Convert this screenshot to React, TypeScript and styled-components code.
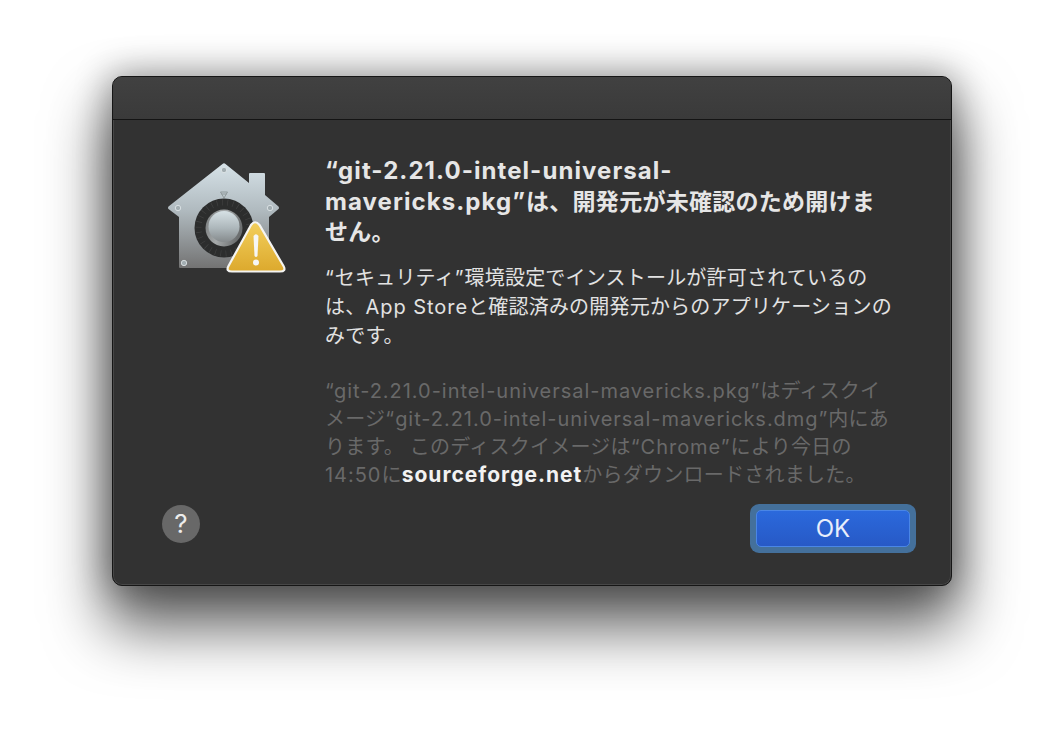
import React from "react";
import styled, { createGlobalStyle } from "styled-components";

const Global = createGlobalStyle`
  html, body { margin: 0; padding: 0; background: #fff; }
  body { width: 1064px; height: 734px; overflow: hidden; font-family: Inter, "Noto Sans CJK JP", sans-serif; }
`;

const Page = styled.div`
  width: 1064px;
  height: 734px;
  box-sizing: border-box;
  padding: 76px 112px 148px;
`;

const Dialog = styled.div`
  width: 840px;
  height: 510px;
  box-sizing: border-box;
  border-radius: 10px;
  background: #323232;
  border: 1px solid #161616;
  box-shadow: inset 0 0 0 1px #474747, 0 36px 60px 6px rgba(0, 0, 0, 0.62), 0 0 34px 4px rgba(0, 0, 0, 0.32);
  display: flex;
  flex-direction: column;
  overflow: hidden;
`;

const TitleBar = styled.div`
  flex: 0 0 42px;
  background: linear-gradient(#414141, #3a3a3a);
  border-bottom: 1px solid #141414;
  box-sizing: content-box;
`;

const Content = styled.div`
  flex: 1;
  display: flex;
  min-height: 0;
`;

const Side = styled.div`
  flex: 0 0 212px;
  box-sizing: border-box;
  padding: 41px 0 42px 49px;
  display: flex;
  flex-direction: column;
  justify-content: space-between;
`;

const Main = styled.div`
  flex: 1;
  padding-top: 36px;
  display: flex;
  flex-direction: column;
`;

const Title = styled.div`
  font-size: 23px;
  font-weight: 700;
  line-height: 30.5px;
  color: #e6e6e6;
  white-space: nowrap;
  letter-spacing: 0.27px;
`;

const TitleLatin = styled.span`
  font-size: 24px;
  letter-spacing: 1.07px;
`;

const Message = styled.div`
  margin-top: 16px;
  font-size: 20px;
  line-height: 29px;
  color: #e2e2e2;
  white-space: nowrap;
  letter-spacing: 0.2px;
`;

const Detail = styled.div`
  margin-top: 26px;
  font-size: 20px;
  line-height: 28.3px;
  color: #696969;
  white-space: nowrap;
  letter-spacing: 0.25px;
`;

const Latin = styled.span`
  letter-spacing: 0.97px;
`;

const Host = styled.span`
  color: #f2f2f2;
  font-size: 21px;
  font-weight: 700;
  letter-spacing: 1px;
`;

const Footer = styled.div`
  display: flex;
  justify-content: flex-end;
  padding: 14px 35px 0 0;
`;

const OkRing = styled.div`
  width: 166px;
  height: 49px;
  box-sizing: border-box;
  padding: 6px;
  border-radius: 9px;
  background: #44709b;
`;

const OkButton = styled.button`
  width: 100%;
  height: 100%;
  display: block;
  padding: 0;
  border-radius: 5px;
  border: 1px solid #4a86e6;
  background: linear-gradient(#2b69dc, #2759c6);
  color: #e8eefb;
  font-family: Inter, sans-serif;
  font-size: 24px;
  font-weight: 400;
  line-height: 35px;
`;

const HelpButton = styled.div`
  width: 38px;
  height: 38px;
  border-radius: 50%;
  background: #686868;
  color: #ececec;
  font-family: Inter, sans-serif;
  font-size: 26px;
  font-weight: 400;
  line-height: 38px;
  text-align: center;
`;

const GateIcon = () => (
  <svg width="125" height="115" viewBox="162 161 125 115">
    <defs>
      <linearGradient id="house" x1="0" y1="0" x2="0" y2="1">
        <stop offset="0" stopColor="#d6e2e8" />
        <stop offset="0.45" stopColor="#b0babf" />
        <stop offset="1" stopColor="#737373" />
      </linearGradient>
      <linearGradient id="knob" x1="0" y1="0" x2="0" y2="1">
        <stop offset="0" stopColor="#d6e1e5" />
        <stop offset="0.55" stopColor="#adb7bb" />
        <stop offset="1" stopColor="#858a8c" />
      </linearGradient>
      <linearGradient id="rim" x1="0" y1="0" x2="1" y2="0.3">
        <stop offset="0" stopColor="#76797a" />
        <stop offset="0.5" stopColor="#a6aaab" />
        <stop offset="1" stopColor="#6c6f70" />
      </linearGradient>
      <linearGradient id="warn" x1="0" y1="0" x2="0" y2="1">
        <stop offset="0" stopColor="#f3cf5c" />
        <stop offset="1" stopColor="#dca92d" />
      </linearGradient>
    </defs>
    <path
      d="M222.500 164 Q224 162.500 225.500 164 L249 183 V174 Q249 173 250 173 H264 Q265 173 265 174 V195 L278.500 206.500 Q279.500 208 278.500 209 L269 217 V267 Q269 268 268 268 H180 Q179 268 179 267 V217 L168.500 209 Q167.500 208 168.500 206.500 Z"
      fill="url(#house)"
    />
    <g fill="#a3aeb2" stroke="#e3eaec" strokeWidth="0.8">
      <circle cx="224" cy="170" r="2.700" />
      <circle cx="178" cy="208" r="2.700" />
      <circle cx="270" cy="208" r="2.700" />
      <circle cx="184" cy="263" r="2.700" />
    </g>
    <path d="M220.500 192 H227.500 L224 198 Z M221.500 194 H226.500" fill="none" stroke="#8a9495" strokeWidth="0.9" />
    <circle cx="224" cy="228" r="29.500" fill="#2c2d2d" />
    <circle cx="224" cy="228" r="25.500" fill="none" stroke="#404141" strokeWidth="6" strokeDasharray="0.7 4.640" />
    <circle cx="224" cy="228" r="18.500" fill="url(#rim)" />
    <circle cx="224" cy="226.500" r="15.500" fill="url(#knob)" />
    <path
      d="M251 225 Q255 219.500 259.500 225 L283.500 266 Q286.500 271.500 280 271.500 H232 Q225.500 271.500 228.500 266 Z"
      fill="url(#warn)"
      stroke="#f4f4f2"
      strokeWidth="2.200"
    />
    <path d="M253.500 236 Q256 232.500 258.500 236 L257.500 256 Q256 258 254.500 256 Z" fill="#f6f6f4" />
    <circle cx="256" cy="262.500" r="3" fill="#f6f6f4" />
  </svg>
);

export default function App() {
  return (
    <>
      <Global />
      <Page>
        <Dialog>
          <TitleBar />
          <Content>
            <Side>
              <GateIcon />
              <HelpButton>?</HelpButton>
            </Side>
            <Main>
              <Title>
                <TitleLatin>“git-2.21.0-intel-universal-</TitleLatin>
                <br />
                <TitleLatin>mavericks.pkg”</TitleLatin>は、開発元が未確認のため開けま
                <br />
                せん。
              </Title>
              <Message>
                <Latin>“</Latin>セキュリティ<Latin>”</Latin>環境設定でインストールが許可されているの
                <br />
                は、<Latin>App Store</Latin>と確認済みの開発元からのアプリケーションの
                <br />
                みです。
              </Message>
              <Detail>
                <Latin>“git-2.21.0-intel-universal-mavericks.pkg”</Latin>はディスクイ
                <br />
                メージ<Latin>“git-2.21.0-intel-universal-mavericks.dmg”</Latin>内にあ
                <br />
                ります。 このディスクイメージは<Latin>“Chrome”</Latin>により今日の
                <br />
                <Latin>14:50</Latin>に<Host>sourceforge.net</Host>からダウンロードされました。
              </Detail>
              <Footer>
                <OkRing>
                  <OkButton>OK</OkButton>
                </OkRing>
              </Footer>
            </Main>
          </Content>
        </Dialog>
      </Page>
    </>
  );
}
